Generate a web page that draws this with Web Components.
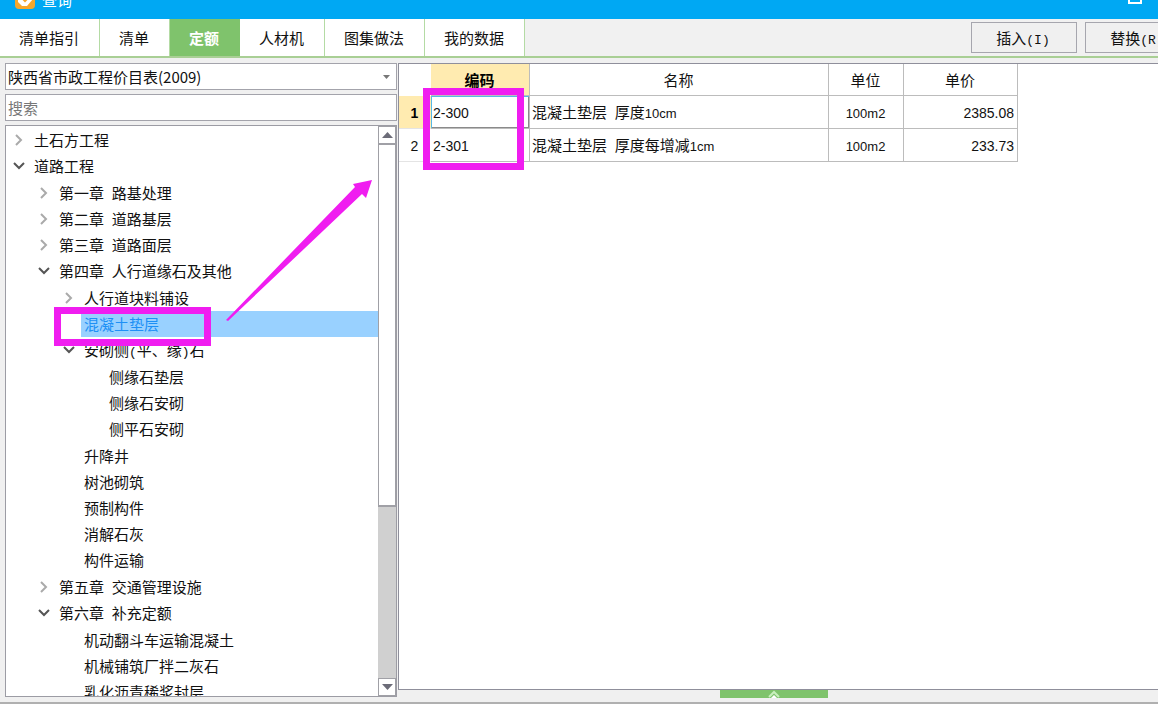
<!DOCTYPE html>
<html lang="zh-CN">
<head>
<meta charset="utf-8">
<title>查询</title>
<style>
  html, body { height: 100%; margin: 0; }
  body { background: #fff; overflow: hidden; font: 15px/20px "Noto Sans CJK SC", sans-serif; color: #111; }
</style>
</head>
<body>
<query-window></query-window>

<script>
const esc = s => s.replace(/&/g, "&amp;").replace(/</g, "&lt;");
// Latin runs, and spaces and brackets, are set in their own faces beside the Chinese text.
const mixed = s => esc(s).replace(/ +|[()A-Z]+|[!-~]+/g, m =>
  /^[ ()A-Z]+$/.test(m) ? `<span class="fix">${m}</span>` : `<span class="lat">${m}</span>`);
const mixedCss = `
  .lat { font-family: "Liberation Sans", sans-serif; font-size: var(--lat, 14px); line-height: 1; }
  .fix { font-family: "Liberation Mono", monospace; font-size: var(--fix, 13px); line-height: 1; }
`;
class Base extends HTMLElement {
  connectedCallback() {
    if (this.shadowRoot) return;
    this.attachShadow({ mode: "open" }).innerHTML = `<style>*{box-sizing:border-box}${mixedCss}${this.css()}</style>${this.html()}`;
  }
}

customElements.define("title-bar", class extends Base {
  css() { return `
    :host { display: flex; align-items: flex-end; height: 19px; background: #00a8f3; overflow: hidden; color: #fff; padding: 0 16px 0 15px; box-sizing: border-box; }
    .logo { width: 20px; height: 20px; margin-bottom: 10px; }
    .name { margin: 0 auto 9px 7px; font-size: 15px; }
    button { border: 0; padding: 0; background: none; height: 12px; margin-bottom: 15px; line-height: 0; }
    svg { display: block; }`; }
  html() { return `
    <svg class="logo" viewBox="0 0 20 20"><rect width="20" height="20" rx="4" fill="#f6a72c"/><path d="M3 7L14 4L18 10L12 17H7L3 13Z" fill="#fff"/><path d="M7 9L10 12L15 7" stroke="#f6a72c" stroke-width="2" fill="none"/></svg>
    <span class="name">查询</span>
    <button aria-label="最大化"><svg width="14" height="12"><rect x="1" y="1" width="12" height="10" fill="none" stroke="#fff" stroke-width="2"/></svg></button>`; }
});

customElements.define("tab-strip", class extends Base {
  css() { return `
    :host { display: flex; height: 39px; box-sizing: border-box; border-bottom: 2px solid #a9cf95; background: #f1f1f1; overflow: hidden; }
    nav { display: flex; }
    nav button { font: inherit; color: inherit; border: 0; border-right: 1px solid #b4dba4; background: #fff; padding: 0 20px 0 19px; }
    nav button[aria-selected=true] { background: #7fc36c; border-color: #7fc36c; color: #fff; font-weight: 700; }
    .actions { display: flex; gap: 8px; align-items: center; margin: 0 -33px 0 auto; }`; }
  html() { return `<nav role="tablist">${["清单指引","清单","定额","人材机","图集做法","我的数据"].map(t =>
      `<button role="tab" aria-selected="${t === "定额"}">${t}</button>`).join("")}</nav>
    <div class="actions"><slot></slot></div>`; }
});

customElements.define("push-button", class extends Base {
  css() { return `
    :host { display: block; }
    button { font: inherit; color: inherit; width: 106px; height: 31px; padding: 0 2px 0 0; border: 1px solid #a6a6ae; background: #f0f0f0; }`; }
  html() { return `<button>${mixed(this.getAttribute("label"))}</button>`; }
});

customElements.define("catalog-filter", class extends Base {
  css() { return `
    :host { display: flex; flex-direction: column; gap: 4px; }
    label { display: block; position: relative; }
    select, input { display: block; width: 100%; height: 27px; margin: 0; padding: 0 2px; border: 1px solid #a3a3ab; border-radius: 0; background: #fff; font: inherit; color: inherit; appearance: none; outline: 0; }
    input::placeholder { color: #777; opacity: 1; }
    svg { position: absolute; right: 7px; top: 12px; pointer-events: none; }`; }
  html() { return `
    <label><select aria-label="定额库"><option>陕西省市政工程价目表(2009)</option></select>
      <svg width="7" height="4"><path d="M0 0H7L3.5 4Z" fill="#777"/></svg></label>
    <label><input type="text" placeholder="搜索" aria-label="搜索"></label>`; }
});

const tree = [
  ["土石方工程", null],
  ["道路工程", [
    ["第一章 路基处理", null], ["第二章 道路基层", null], ["第三章 道路面层", null],
    ["第四章 人行道缘石及其他", [
      ["人行道块料铺设", null],
      ["混凝土垫层"],
      ["安砌侧(平、缘)石", [["侧缘石垫层"], ["侧缘石安砌"], ["侧平石安砌"]]],
      ["升降井"], ["树池砌筑"], ["预制构件"], ["消解石灰"], ["构件运输"]]],
    ["第五章 交通管理设施", null],
    ["第六章 补充定额", [["机动翻斗车运输混凝土"], ["机械铺筑厂拌二灰石"], ["乳化沥青稀浆封层"]]]
  ]]
];
// A null child list is a folded node; no child list at all is a leaf.
const arrow = kids => kids === undefined ? "" : kids
  ? `<svg width="12" height="8"><path d="M1 1L6 6L11 1" fill="none" stroke="#555" stroke-width="2"/></svg>`
  : `<svg width="8" height="12"><path d="M1 1L6 6L1 11" fill="none" stroke="#aaa" stroke-width="2"/></svg>`;
const branch = list => list.map(([t, kids]) => `
  <li role="treeitem"${t === "混凝土垫层" ? ' aria-selected="true"' : ""}><div class="row"><i>${arrow(kids)}</i><span class="label">${mixed(t)}</span></div>
  ${kids ? `<ul role="group">${branch(kids)}</ul>` : ""}</li>`).join("");

customElements.define("catalog-tree", class extends Base {
  css() { return `
    :host { display: flex; box-sizing: border-box; border: 1px solid #9c9ca4; background: #fff; overflow: hidden; min-height: 0; }
    ul { list-style: none; margin: 0; padding: 0; }
    .list { flex: 1; padding: 1px 0 0 1px; }
    ul ul { margin-left: 25px; padding: 1px 0; }
    .row { display: flex; height: 26px; }
    i { flex: 0 0 23px; display: flex; align-items: center; justify-content: center; }
    .label { flex: 1; margin-left: 1px; padding-left: 3px; line-height: 26px; white-space: nowrap; }
    [aria-selected] .label { background: #99d1ff; color: #1e90f5; }
    .bar { flex: 0 0 18px; display: flex; flex-direction: column; background: #d0d0d0; }
    .bar button { height: 18px; flex: none; padding: 0; border: 1px solid #a0a0a6; background: #fff; display: flex; align-items: center; justify-content: center; }
    .track { flex: 1; }
    .thumb { height: 68%; border: 1px solid #a0a0a6; border-bottom-width: 2px; background: #fff; }`; }
  html() { return `<ul class="list" role="tree">${branch(tree)}</ul>
    <div class="bar">
      <button aria-label="向上"><svg width="11" height="6"><path d="M0 6H11L5.5 0Z" fill="#6c6c78"/></svg></button>
      <div class="track"><div class="thumb"></div></div>
      <button aria-label="向下"><svg width="11" height="6"><path d="M0 0H11L5.5 6Z" fill="#6c6c78"/></svg></button>
    </div>`; }
});

customElements.define("price-table", class extends Base {
  css() { return `
    :host { display: block; box-sizing: border-box; background: #fff; border: solid #8f8f9b; border-width: 1px 0 1px 1px; overflow: hidden; }
    table { border-collapse: separate; border-spacing: 0; table-layout: fixed; width: 619px; }
    th, td { height: 33px; padding: 0 3px 0 2px; border: solid #bcbcbc; border-width: 0 1px 1px 0; font-weight: 400; text-align: left; white-space: nowrap; }
    thead th, thead td { height: 32px; text-align: center; }
    thead td { border-width: 0; }
    tbody th { border-width: 0 0 1px; border-color: #e4e4e4; text-align: center; }
    .hot { background: #ffebb0; font-weight: 700; color: #000; }
    .name, .unit { --lat: 13px; }
    .unit { text-align: center; }
    .price { text-align: right; }
    .current { box-shadow: inset 1px 1px #55b8e6, inset -1px -1px #8a8a8a; }`; }
  html() {
    const rows = [["1", "2-300", "混凝土垫层 厚度10cm", "100m2", "2385.08"], ["2", "2-301", "混凝土垫层 厚度每增减1cm", "100m2", "233.73"]];
    return `<table>
      <colgroup><col style="width:32px"><col style="width:99px"><col style="width:299px"><col style="width:75px"><col style="width:114px"></colgroup>
      <thead><tr><td></td><th class="hot">编码</th><th>名称</th><th>单位</th><th>单价</th></tr></thead>
      <tbody>${rows.map(([n, code, name, unit, price], k) => `<tr><th class="${k ? "" : "hot"}">${mixed(n)}</th>
        <td class="${k ? "" : "current"}">${mixed(code)}</td><td class="name">${mixed(name)}</td><td class="unit">${mixed(unit)}</td><td class="price">${mixed(price)}</td></tr>`).join("")}</tbody></table>`; }
});

customElements.define("fold-handle", class extends Base {
  css() { return `
    :host { display: flex; justify-content: center; padding-right: 8px; height: 12px; box-sizing: border-box; }
    button { width: 108px; height: 8px; padding: 0; border: 0; background: #7fc36c; display: flex; justify-content: center; }`; }
  html() { return `<button aria-label="展开"><svg width="12" height="8"><path d="M1 7L6 2L11 7" fill="none" stroke="#c9efbd" stroke-width="2"/><path d="M3 8L6 5L9 8Z" fill="#fff"/></svg></button>`; }
});

// Marker frames and arrow drawn over the window.
customElements.define("mark-up", class extends Base {
  css() { return `:host { position: absolute; left: 0; top: 0; pointer-events: none; } svg { display: block; }`; }
  html() { return `<svg width="530" height="350" fill="none" stroke="#f01df0" stroke-width="7">
    <rect x="426.5" y="91.5" width="94" height="75"/>
    <rect x="57.5" y="310.5" width="150" height="32"/>
    <path stroke="none" fill="#f01df0" d="M226 320L355 187L353 184L372 180L366 198L362 194L228 321Z"/></svg>`; }
});

customElements.define("query-window", class extends Base {
  css() { return `
    :host { display: flex; flex-direction: column; height: 100vh; box-sizing: border-box; padding-bottom: 15px; position: relative; overflow: hidden; }
    main { flex: 1; min-height: 0; display: flex; gap: 1px; background: #f0f0f0; border-bottom: 2px solid #b0b0b0; padding: 5px 0 0 5px; }
    aside { flex: 0 0 392px; display: flex; flex-direction: column; gap: 4px; padding-bottom: 5px; }
    catalog-tree { flex: 1; }
    section { flex: 1; min-width: 0; display: flex; flex-direction: column; }
    price-table { flex: 1; }`; }
  html() { return `
    <title-bar></title-bar>
    <tab-strip><push-button label="插入(I)"></push-button><push-button label="替换(R)"></push-button></tab-strip>
    <main>
      <aside><catalog-filter></catalog-filter><catalog-tree></catalog-tree></aside>
      <section><price-table></price-table><fold-handle></fold-handle></section>
    </main>
    <mark-up></mark-up>`; }
});
</script>
</body>
</html>
